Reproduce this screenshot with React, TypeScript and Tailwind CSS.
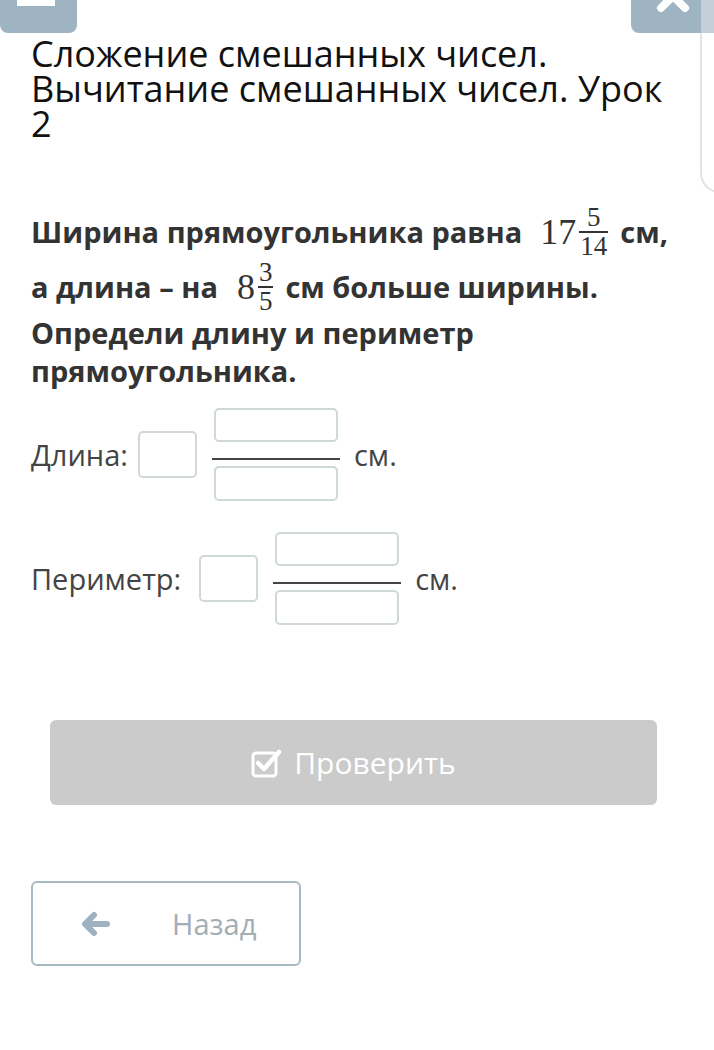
import React from "react";

const sans = { fontFamily: '"Open Sans", "Noto Sans", sans-serif' };
const serif = { fontFamily: '"Liberation Serif", "DejaVu Serif", serif' };

function Box({ w, h }: { w: number; h: number }) {
  return (
    <div
      className="rounded-[5px] border-2 border-[#cfd9da] bg-white"
      style={{ width: w, height: h }}
    />
  );
}

function InputFraction() {
  return (
    <div className="flex flex-col items-center">
      <Box w={124} h={34} />
      <div className="mt-[16px] h-[2px] w-[128px] bg-[#444]" />
      <div className="mt-[6px]">
        <Box w={124} h={35} />
      </div>
    </div>
  );
}

function Mixed({ whole, num, den }: { whole: string; num: string; den: string }) {
  return (
    <span className="inline-flex items-center font-normal text-[#333]" style={serif}>
      <span className="text-[36px] leading-none">{whole}</span>
      <span className="ml-[3px] flex flex-col items-center">
        <span className="px-[1px] text-[27px] leading-[23px]">{num}</span>
        <span className="my-[2px] h-[2px] w-full bg-[#333]" />
        <span className="px-[1px] text-[27px] leading-[23px]">{den}</span>
      </span>
    </span>
  );
}

export default function App() {
  return (
    <div className="relative min-h-[1050px] w-[714px] overflow-hidden bg-white" style={sans}>
      {/* right card edge */}
      <div className="absolute right-[-20px] top-[33px] h-[160px] w-[34px] rounded-bl-[20px] border-b-2 border-l-2 border-[#e2e2e2]" />

      {/* top bar */}
      <div className="flex h-[33px] items-start justify-between">
        <div className="relative h-[33px] w-[77px] rounded-b-[8px] bg-[#9fb4c3]">
          <div className="absolute left-[17px] top-0 h-[6px] w-[38px] bg-white" />
        </div>
        <div className="flex h-[33px]">
          <div className="relative h-[33px] w-[70px] rounded-bl-[8px] bg-[#9fb4c3]">
            <svg className="absolute left-0 top-0" width="70" height="14" viewBox="0 0 70 14">
              <path d="M42 -4 L30 8 M42 -4 L54 8" stroke="white" strokeWidth="8" strokeLinecap="round" fill="none" />
            </svg>
          </div>
          <div className="h-[33px] w-[13px] bg-[#c3d0d9]" />
        </div>
      </div>

      <div className="px-[31px]">
        <h1 className="mt-[3px] w-[650px] text-[36px] font-normal leading-[35px] text-[#111]">
          Сложение смешанных чисел. Вычитание смешанных чисел. Урок 2
        </h1>

        <div className="mt-[63px] text-[29px] font-bold text-[#333]">
          <div className="flex h-[55px] items-center">
            <span className="leading-[38px]">Ширина прямоугольника равна</span>
            <span className="ml-[18px]">
              <Mixed whole="17" num="5" den="14" />
            </span>
            <span className="ml-[12px] leading-[38px]">см,</span>
          </div>
          <div className="flex h-[55px] items-center">
            <span className="leading-[38px]">а длина – на</span>
            <span className="ml-[19px]">
              <Mixed whole="8" num="3" den="5" />
            </span>
            <span className="ml-[12px] leading-[38px]">см больше ширины.</span>
          </div>
          <p className="leading-[38px]">Определи длину и периметр</p>
          <p className="leading-[38px]">прямоугольника.</p>
        </div>

        <div className="mt-[18px] flex items-center text-[29px] text-[#444]">
          <span>Длина:</span>
          <div className="ml-[10px]">
            <Box w={59} h={47} />
          </div>
          <div className="ml-[15px]">
            <InputFraction />
          </div>
          <span className="ml-[14px]">см.</span>
        </div>

        <div className="mt-[31px] flex items-center text-[29px] text-[#444]">
          <span>Периметр:</span>
          <div className="ml-[18px]">
            <Box w={59} h={47} />
          </div>
          <div className="ml-[15px]">
            <InputFraction />
          </div>
          <span className="ml-[14px]">см.</span>
        </div>
      </div>

      <div className="ml-[50px] mt-[95px] flex h-[85px] w-[607px] items-center justify-center rounded-[6px] bg-[#cbcbcb] text-[30px] text-white">
        <svg width="32" height="30" viewBox="0 0 32 30" className="mr-[11px]">
          <rect x="2" y="5" width="23" height="23" rx="3" stroke="white" strokeWidth="3" fill="none" />
          <path d="M7 15 L13 21 L28 4" stroke="white" strokeWidth="4.5" fill="none" strokeLinejoin="round" strokeLinecap="round" />
        </svg>
        <span>Проверить</span>
      </div>

      <div className="ml-[31px] mt-[76px] flex h-[85px] w-[270px] items-center rounded-[6px] border-2 border-[#a9b9c4] bg-white">
        <svg width="30" height="26" viewBox="0 0 30 26" className="ml-[47px]">
          <path d="M27 13 H6 M14 4 L5 13 L14 22" stroke="#9db1c0" strokeWidth="6" strokeLinecap="round" strokeLinejoin="round" fill="none" />
        </svg>
        <span className="ml-[62px] text-[29px] text-[#a2adb4]">Назад</span>
      </div>
    </div>
  );
}
